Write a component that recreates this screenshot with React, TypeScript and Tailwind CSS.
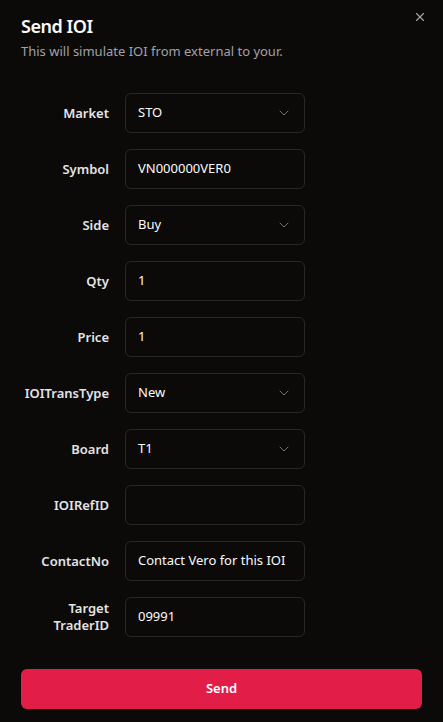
import { ChevronDown, X } from 'lucide-react';

const fields = [
  { label: 'Market', value: 'STO', select: true },
  { label: 'Symbol', value: 'VN000000VER0' },
  { label: 'Side', value: 'Buy', select: true },
  { label: 'Qty', value: '1' },
  { label: 'Price', value: '1' },
  { label: 'IOITransType', value: 'New', select: true },
  { label: 'Board', value: 'T1', select: true },
  { label: 'IOIRefID', value: '' },
  { label: 'ContactNo', value: 'Contact Vero for this IOI' },
  { label: 'Target TraderID', value: '09991' },
];

export default function App() {
  return (
    <div
      className="relative w-[443px] h-[722px] bg-[#0c0a09] text-[#fafafa] overflow-hidden"
      style={{ fontFamily: '"Noto Sans", "Open Sans", sans-serif' }}
    >
      <button className="absolute right-[16px] top-[10px] text-[#a1a1aa]">
        <X className="w-[14px] h-[14px]" strokeWidth={2} />
      </button>

      <div className="px-[21px] pt-[14px]">
        <h2 className="text-[18px] font-semibold leading-[24px] tracking-tight">Send IOI</h2>
        <p className="mt-[3px] text-[13px] leading-[20px] text-[#a1a1aa]">
          This will simulate IOI from external to your.
        </p>
      </div>

      {/* Form rows */}
      <div className="mt-[32px] flex flex-col gap-[16px]">
        {fields.map((f) => (
          <div key={f.label} className="flex items-center">
            <label className="w-[109px] text-right text-[13px] font-semibold leading-[17px] text-[#e4e4e7]">
              {f.label === 'Target TraderID' ? (
                <>
                  Target
                  <br />
                  TraderID
                </>
              ) : (
                f.label
              )}
            </label>
            <div className="ml-[16px] w-[180px] h-[40px] flex items-center justify-between rounded-[6px] border border-[#27272a] px-[12px] text-[13px] text-[#fafafa]">
              <span>{f.value}</span>
              {f.select && <ChevronDown className="w-[16px] h-[16px] text-[#71717a]" strokeWidth={1.5} />}
            </div>
          </div>
        ))}
      </div>

      <div className="px-[21px] mt-[32px]">
        <button className="w-full h-[40px] rounded-[6px] bg-[#e11d48] text-[13px] font-semibold text-white">
          Send
        </button>
      </div>
    </div>
  );
}
